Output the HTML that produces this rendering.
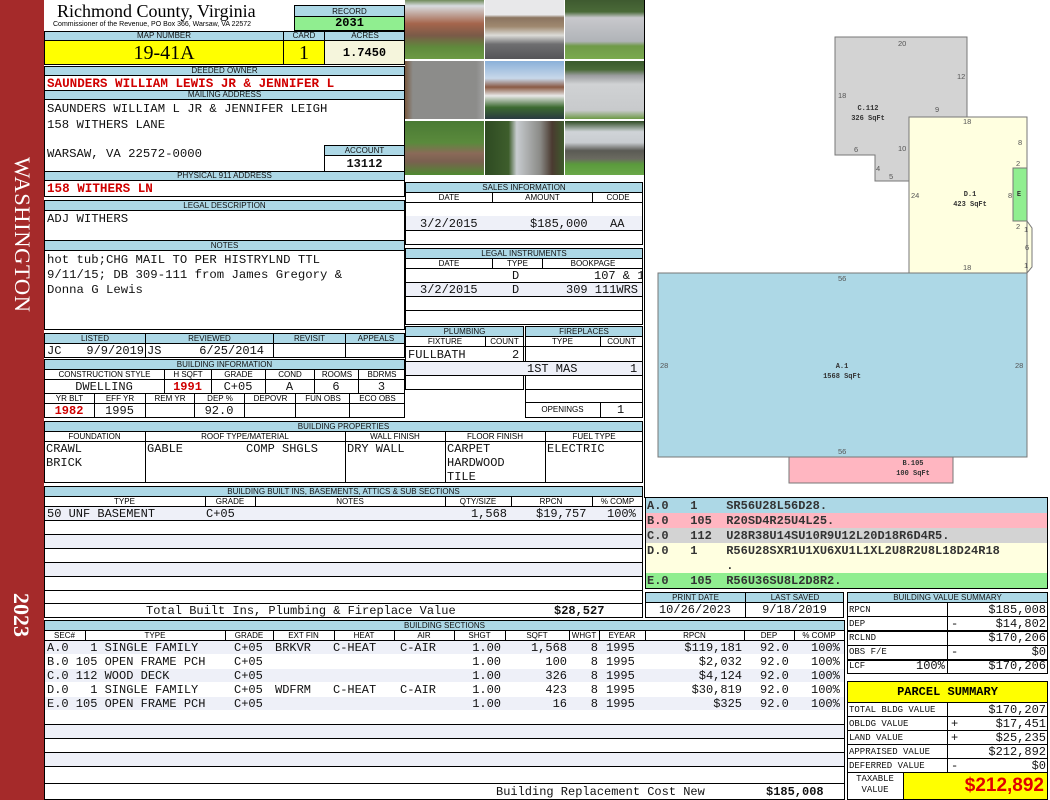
<!DOCTYPE html>
<html><head><meta charset="utf-8"><style>
*{box-sizing:border-box;margin:0;padding:0}
body{width:1050px;height:800px;position:relative;background:#fff;overflow:hidden;font-family:"Liberation Sans",sans-serif}
div{position:absolute}
.h{background:#add8e6;border:1px solid #000;font-size:8px;text-align:center;line-height:8px;color:#111;white-space:nowrap;overflow:hidden}
.h span{position:absolute;top:0;text-align:center;border-right:1px solid #000;height:100%}
.b{border:1px solid #000}
.m{font-family:"Liberation Mono",monospace;font-size:12px;white-space:pre;line-height:14px;color:#111}
.r{color:#d00000;font-weight:bold}
.hl{height:1px;background:#000}
.vl{width:1px;background:#000}
.sh{background:#eef0f8}
.ra{text-align:right}
</style></head><body>
<!-- left bar -->
<div style="left:0;top:0;width:44px;height:800px;background:#a52a2a"></div>
<div style="left:22px;top:157px;width:0;height:0"><div style="left:0;top:0;width:170px;transform-origin:0 0;transform:rotate(90deg) translate(0,-13px);color:#fff;font:22.5px 'Liberation Serif',serif;letter-spacing:0.6px;white-space:nowrap">WASHINGTON</div></div>
<div style="left:22px;top:593px"><div style="left:0;top:0;width:40px;transform-origin:0 0;transform:rotate(90deg) translate(0,-12px);color:#fff;font:bold 22px 'Liberation Serif',serif">2023</div></div>

<!-- header -->
<div style="left:57px;top:2px;font:18px 'Liberation Serif',serif;color:#000;line-height:19px;white-space:nowrap">Richmond County, Virginia</div>
<div style="left:53px;top:20px;font-size:7px;line-height:9px;color:#000;white-space:nowrap">Commissioner of the Revenue, PO Box 366, Warsaw, VA 22572</div>
<div class="h" style="left:294px;top:5px;width:111px;height:12px;line-height:11px">RECORD</div>
<div style="left:294px;top:16px;width:111px;height:15px;background:#90ee90;border:1px solid #000;text-align:center;font:bold 12px 'Liberation Mono',monospace;line-height:13px">2031</div>
<div class="h" style="left:44px;top:31px;width:361px;height:10px"><span style="left:0;width:239px">MAP NUMBER</span><span style="left:239px;width:41px">CARD</span><span style="left:280px;width:80px;border:0">ACRES</span></div>
<div style="left:44px;top:40px;width:240px;height:25px;background:#ffff00;border:1px solid #000;text-align:center;font:20px 'Liberation Serif',serif;line-height:24px">19-41A</div>
<div style="left:283px;top:40px;width:42px;height:25px;background:#ffff00;border:1px solid #000;text-align:center;font:20px 'Liberation Serif',serif;line-height:24px">1</div>
<div style="left:324px;top:40px;width:81px;height:25px;background:#f5f5dc;border:1px solid #000;text-align:center;font:bold 12px 'Liberation Mono',monospace;line-height:24px">1.7450</div>
<div class="h" style="left:44px;top:66px;width:361px;height:10px">DEEDED OWNER</div>
<div class="b" style="left:44px;top:75px;width:361px;height:16px"></div>
<div class="m r" style="left:47px;top:77px;font-size:12.6px">SAUNDERS WILLIAM LEWIS JR &amp; JENNIFER L</div>
<div class="h" style="left:44px;top:90px;width:361px;height:10px">MAILING ADDRESS</div>
<div class="b" style="left:44px;top:99px;width:361px;height:73px"></div>
<div class="m" style="left:47px;top:102px;font-size:12.3px">SAUNDERS WILLIAM L JR &amp; JENNIFER LEIGH</div>
<div class="m" style="left:47px;top:118px;font-size:12.3px">158 WITHERS LANE</div>
<div class="m" style="left:47px;top:147px;font-size:12.3px">WARSAW, VA 22572-0000</div>
<div class="h" style="left:324px;top:145px;width:81px;height:11px;line-height:10px">ACCOUNT</div>
<div class="b" style="left:324px;top:155px;width:81px;height:17px"></div>
<div class="m" style="left:324px;top:157px;width:81px;text-align:center;font-weight:bold">13112</div>
<div class="h" style="left:44px;top:171px;width:361px;height:10px">PHYSICAL 911 ADDRESS</div>
<div class="b" style="left:44px;top:180px;width:361px;height:17px"></div>
<div class="m r" style="left:47px;top:182px;font-size:12.6px">158 WITHERS LN</div>

<div class="h" style="left:44px;top:200px;width:361px;height:11px;line-height:10px">LEGAL DESCRIPTION</div>
<div class="b" style="left:44px;top:210px;width:361px;height:31px"></div>
<div class="m" style="left:47px;top:212px;font-size:12.3px">ADJ WITHERS</div>
<div class="h" style="left:44px;top:240px;width:361px;height:11px;line-height:10px">NOTES</div>
<div class="b" style="left:44px;top:250px;width:361px;height:80px"></div>
<div class="m" style="left:47px;top:253px;line-height:15px;font-size:12.3px">hot tub;CHG MAIL TO PER HISTRYLND TTL
9/11/15; DB 309-111 from James Gregory &amp;
Donna G Lewis</div>

<!-- listed -->
<div class="h" style="left:44px;top:333px;width:361px;height:11px;line-height:10px"><span style="left:0;width:101px">LISTED</span><span style="left:101px;width:128px">REVIEWED</span><span style="left:229px;width:72px">REVISIT</span><span style="left:301px;width:60px;border:0">APPEALS</span></div>
<div class="b" style="left:44px;top:343px;width:361px;height:15px"></div>
<div class="vl" style="left:145px;top:343px;height:15px"></div><div class="vl" style="left:273px;top:343px;height:15px"></div><div class="vl" style="left:345px;top:343px;height:15px"></div>
<div class="m" style="left:47px;top:344px">JC</div><div class="m ra" style="left:80px;top:344px;width:64px">9/9/2019</div>
<div class="m" style="left:147px;top:344px">JS</div><div class="m ra" style="left:180px;top:344px;width:84px">6/25/2014</div>

<!-- building info -->
<div class="h" style="left:44px;top:359px;width:361px;height:11px;line-height:10px">BUILDING INFORMATION</div>
<div class="b" style="left:44px;top:369px;width:361px;height:49px"></div>
<div class="hl" style="left:44px;top:379px;width:361px"></div>
<div class="hl" style="left:44px;top:393px;width:361px"></div>
<div class="hl" style="left:44px;top:403px;width:361px"></div>
<div style="left:45px;top:370px;width:359px;height:9px;font-size:8px;line-height:9px">
<div style="left:0;width:119px;text-align:center">CONSTRUCTION STYLE</div><div style="left:120px;width:46px;text-align:center">H SQFT</div><div style="left:167px;width:53px;text-align:center">GRADE</div><div style="left:221px;width:48px;text-align:center">COND</div><div style="left:270px;width:44px;text-align:center">ROOMS</div><div style="left:314px;width:46px;text-align:center">BDRMS</div></div>
<div class="vl" style="left:164px;top:369px;height:24px"></div><div class="vl" style="left:211px;top:369px;height:24px"></div><div class="vl" style="left:265px;top:369px;height:24px"></div><div class="vl" style="left:314px;top:369px;height:24px"></div><div class="vl" style="left:358px;top:369px;height:24px"></div>
<div class="m" style="left:44px;top:380px;width:120px;text-align:center">DWELLING</div>
<div class="m r" style="left:164px;top:380px;width:47px;text-align:center">1991</div>
<div class="m" style="left:211px;top:380px;width:54px;text-align:center">C+05</div>
<div class="m" style="left:265px;top:380px;width:49px;text-align:center">A</div>
<div class="m" style="left:314px;top:380px;width:44px;text-align:center">6</div>
<div class="m" style="left:358px;top:380px;width:47px;text-align:center">3</div>
<div style="left:45px;top:394px;width:359px;height:9px;font-size:8px;line-height:9px">
<div style="left:0;width:49px;text-align:center">YR BLT</div><div style="left:50px;width:50px;text-align:center">EFF YR</div><div style="left:100px;width:50px;text-align:center">REM YR</div><div style="left:150px;width:50px;text-align:center">DEP %</div><div style="left:200px;width:51px;text-align:center">DEPOVR</div><div style="left:251px;width:54px;text-align:center">FUN OBS</div><div style="left:305px;width:55px;text-align:center">ECO OBS</div></div>
<div class="vl" style="left:94px;top:393px;height:25px"></div><div class="vl" style="left:145px;top:393px;height:25px"></div><div class="vl" style="left:194px;top:393px;height:25px"></div><div class="vl" style="left:244px;top:393px;height:25px"></div><div class="vl" style="left:295px;top:393px;height:25px"></div><div class="vl" style="left:349px;top:393px;height:25px"></div>
<div class="m r" style="left:44px;top:404px;width:50px;text-align:center">1982</div>
<div class="m" style="left:94px;top:404px;width:51px;text-align:center">1995</div>
<div class="m" style="left:194px;top:404px;width:50px;text-align:center">92.0</div>

<!-- photos -->
<div style="left:405px;top:0;width:240px;height:175px;background:#fff"></div>
<div style="left:405px;top:0;width:79px;height:59px;background:linear-gradient(#6f8a5a 0%,#d8dce0 10%,#a5654c 40%,#7a5a48 60%,#5f8a3c 80%,#6d9a45)"></div>
<div style="left:485px;top:0;width:79px;height:59px;background:linear-gradient(#e8e8ea 0%,#e8e8ea 25%,#8a7460 30%,#a08970 45%,#dcdcd8 60%,#6e6e70 75%,#555558)"></div>
<div style="left:565px;top:0;width:80px;height:59px;background:linear-gradient(#3e5a30 0%,#4a6a38 20%,#c8c8cc 30%,#b0b4b8 70%,#6f9a48 78%,#7aaa4e)"></div>
<div style="left:405px;top:61px;width:79px;height:58px;background:linear-gradient(90deg,#7a5a40 0%,#8c8c8a 10%,#8c8c8a 90%,#a0a0a0);"></div>
<div style="left:485px;top:61px;width:79px;height:58px;background:linear-gradient(#8ab0d8 0%,#c8d8ea 30%,#8a5a44 45%,#e8e8e8 60%,#3c6a30 80%,#2a3a40)"></div>
<div style="left:565px;top:61px;width:80px;height:58px;background:linear-gradient(#3a5a2c 0%,#4a6a38 15%,#9a9c9e 25%,#d0d2d4 40%,#c8cacc 85%,#6d9a45)"></div>
<div style="left:405px;top:121px;width:79px;height:54px;background:linear-gradient(#4a7a34 0%,#5a8a3c 40%,#8a6a58 60%,#7a6050 75%,#4e8a30)"></div>
<div style="left:485px;top:121px;width:79px;height:54px;background:linear-gradient(90deg,#2e4a22 0%,#3e5e2c 30%,#c8ccd0 40%,#8a8a86 70%,#4a3a30 85%,#3e5a2c)"></div>
<div style="left:565px;top:121px;width:80px;height:54px;background:linear-gradient(#2e4a22 0%,#d0d4d8 20%,#c8ccd0 40%,#5a5a54 55%,#6a6a60 70%,#5a9a3c 80%,#6aa848)"></div>
<div class="vl" style="left:644px;top:0;height:498px"></div>

<!-- sales -->
<div class="h" style="left:405px;top:182px;width:238px;height:11px;line-height:10px">SALES INFORMATION</div>
<div class="b" style="left:405px;top:192px;width:238px;height:53px"></div>
<div style="left:406px;top:193px;width:236px;font-size:8px;line-height:9px"><div style="left:0;width:86px;text-align:center">DATE</div><div style="left:87px;width:99px;text-align:center">AMOUNT</div><div style="left:187px;width:50px;text-align:center">CODE</div></div>
<div class="vl" style="left:492px;top:192px;height:10px"></div><div class="vl" style="left:592px;top:192px;height:10px"></div>
<div class="hl" style="left:405px;top:202px;width:238px"></div>
<div class="sh" style="left:406px;top:216px;width:236px;height:14px"></div>
<div class="hl" style="left:405px;top:230px;width:238px"></div>
<div class="m" style="left:420px;top:217px">3/2/2015</div><div class="m" style="left:530px;top:217px">$185,000</div><div class="m" style="left:610px;top:217px">AA</div>

<div class="h" style="left:405px;top:248px;width:238px;height:11px;line-height:10px">LEGAL INSTRUMENTS</div>
<div class="b" style="left:405px;top:258px;width:238px;height:67px"></div>
<div style="left:406px;top:259px;width:236px;font-size:8px;line-height:9px"><div style="left:0;width:86px;text-align:center">DATE</div><div style="left:87px;width:49px;text-align:center">TYPE</div><div style="left:137px;width:100px;text-align:center">BOOKPAGE</div></div>
<div class="vl" style="left:492px;top:258px;height:10px"></div><div class="vl" style="left:542px;top:258px;height:10px"></div>
<div class="hl" style="left:405px;top:268px;width:238px"></div>
<div class="hl" style="left:405px;top:282px;width:238px"></div>
<div class="sh" style="left:406px;top:283px;width:236px;height:13px"></div>
<div class="hl" style="left:405px;top:296px;width:238px"></div>
<div class="hl" style="left:405px;top:310px;width:238px"></div>
<div class="m" style="left:512px;top:269px">D</div><div class="m" style="left:594px;top:269px;width:48px;overflow:hidden">107 &amp; 1</div>
<div class="m" style="left:420px;top:283px">3/2/2015</div><div class="m" style="left:512px;top:283px">D</div><div class="m" style="left:566px;top:283px">309 111WRS</div>

<!-- plumbing -->
<div class="h" style="left:405px;top:326px;width:119px;height:11px;line-height:10px">PLUMBING</div>
<div class="h" style="left:525px;top:326px;width:118px;height:11px;line-height:10px">FIREPLACES</div>
<div class="b" style="left:405px;top:336px;width:119px;height:54px"></div>
<div class="b" style="left:525px;top:336px;width:118px;height:82px"></div>
<div style="left:405px;top:337px;width:238px;font-size:8px;line-height:9px"><div style="left:0;width:80px;text-align:center">FIXTURE</div><div style="left:80px;width:39px;text-align:center">COUNT</div><div style="left:120px;width:75px;text-align:center">TYPE</div><div style="left:195px;width:43px;text-align:center">COUNT</div></div>
<div class="vl" style="left:485px;top:336px;height:10px"></div><div class="vl" style="left:600px;top:336px;height:10px"></div>
<div class="hl" style="left:405px;top:346px;width:238px"></div>
<div class="hl" style="left:405px;top:361px;width:238px"></div>
<div class="hl" style="left:405px;top:375px;width:238px"></div>
<div class="sh" style="left:406px;top:362px;width:236px;height:13px"></div>
<div class="hl" style="left:525px;top:389px;width:118px"></div>
<div class="hl" style="left:525px;top:402px;width:118px"></div>
<div class="vl" style="left:600px;top:402px;height:16px"></div>
<div class="m" style="left:408px;top:348px">FULLBATH</div><div class="m" style="left:512px;top:348px">2</div>
<div class="m" style="left:527px;top:362px">1ST MAS</div><div class="m" style="left:630px;top:362px">1</div>
<div style="left:525px;top:405px;width:75px;text-align:center;font-size:8px">OPENINGS</div><div class="m" style="left:617px;top:403px">1</div>

<!-- building properties -->
<div class="h" style="left:44px;top:421px;width:599px;height:11px;line-height:10px">BUILDING PROPERTIES</div>
<div class="b" style="left:44px;top:431px;width:599px;height:52px"></div>
<div style="left:44px;top:432px;width:599px;font-size:8px;line-height:9px"><div style="left:0;width:101px;text-align:center">FOUNDATION</div><div style="left:101px;width:200px;text-align:center">ROOF TYPE/MATERIAL</div><div style="left:301px;width:100px;text-align:center">WALL FINISH</div><div style="left:401px;width:100px;text-align:center">FLOOR FINISH</div><div style="left:501px;width:98px;text-align:center">FUEL TYPE</div></div>
<div class="hl" style="left:44px;top:441px;width:599px"></div>
<div class="vl" style="left:145px;top:431px;height:52px"></div><div class="vl" style="left:345px;top:431px;height:52px"></div><div class="vl" style="left:445px;top:431px;height:52px"></div><div class="vl" style="left:545px;top:431px;height:52px"></div>
<div class="m" style="left:46px;top:442px">CRAWL
BRICK</div>
<div class="m" style="left:147px;top:442px">GABLE</div><div class="m" style="left:246px;top:442px">COMP SHGLS</div>
<div class="m" style="left:347px;top:442px">DRY WALL</div>
<div class="m" style="left:447px;top:442px">CARPET
HARDWOOD
TILE</div>
<div class="m" style="left:547px;top:442px">ELECTRIC</div>

<!-- built ins -->
<div class="h" style="left:44px;top:486px;width:599px;height:11px;line-height:10px">BUILDING BUILT INS, BASEMENTS, ATTICS &amp; SUB SECTIONS</div>
<div class="b" style="left:44px;top:496px;width:599px;height:122px"></div>
<div style="left:44px;top:497px;width:599px;font-size:8px;line-height:9px"><div style="left:0;width:161px;text-align:center">TYPE</div><div style="left:161px;width:50px;text-align:center">GRADE</div><div style="left:211px;width:190px;text-align:center">NOTES</div><div style="left:401px;width:66px;text-align:center">QTY/SIZE</div><div style="left:467px;width:80px;text-align:center">RPCN</div><div style="left:548px;width:51px;text-align:center">% COMP</div></div>
<div class="vl" style="left:205px;top:496px;height:10px"></div><div class="vl" style="left:255px;top:496px;height:10px"></div><div class="vl" style="left:445px;top:496px;height:10px"></div><div class="vl" style="left:511px;top:496px;height:10px"></div><div class="vl" style="left:592px;top:496px;height:10px"></div>
<div class="hl" style="left:44px;top:506px;width:599px"></div>
<div class="sh" style="left:45px;top:507px;width:597px;height:13px"></div>
<div class="hl" style="left:44px;top:520px;width:599px"></div>
<div class="hl" style="left:44px;top:534px;width:599px"></div>
<div class="sh" style="left:45px;top:535px;width:597px;height:13px"></div>
<div class="hl" style="left:44px;top:548px;width:599px"></div>
<div class="hl" style="left:44px;top:562px;width:599px"></div>
<div class="sh" style="left:45px;top:563px;width:597px;height:13px"></div>
<div class="hl" style="left:44px;top:576px;width:599px"></div>
<div class="hl" style="left:44px;top:590px;width:599px"></div>
<div class="hl" style="left:44px;top:603px;width:599px"></div>
<div class="m" style="left:47px;top:507px">50 UNF BASEMENT</div><div class="m" style="left:206px;top:507px">C+05</div>
<div class="m" style="left:471px;top:507px">1,568</div><div class="m" style="left:536px;top:507px">$19,757</div><div class="m" style="left:607px;top:507px">100%</div>
<div class="m" style="left:146px;top:604px">Total Built Ins, Plumbing &amp; Fireplace Value</div>
<div class="m" style="left:554px;top:604px;font-weight:bold">$28,527</div>

<!-- building sections -->
<div class="h" style="left:44px;top:620px;width:801px;height:11px;line-height:10px">BUILDING SECTIONS</div>
<div class="b" style="left:44px;top:630px;width:801px;height:170px"></div>
<div style="left:44px;top:631px;width:801px;font-size:8px;line-height:9px"><div style="left:0;width:41px;text-align:center">SEC#</div><div style="left:41px;width:140px;text-align:center">TYPE</div><div style="left:181px;width:48px;text-align:center">GRADE</div><div style="left:229px;width:61px;text-align:center">EXT FIN</div><div style="left:290px;width:60px;text-align:center">HEAT</div><div style="left:350px;width:60px;text-align:center">AIR</div><div style="left:410px;width:51px;text-align:center">SHGT</div><div style="left:461px;width:64px;text-align:center">SQFT</div><div style="left:525px;width:30px;text-align:center">WHGT</div><div style="left:555px;width:46px;text-align:center">EYEAR</div><div style="left:601px;width:99px;text-align:center">RPCN</div><div style="left:700px;width:50px;text-align:center">DEP</div><div style="left:750px;width:50px;text-align:center">% COMP</div></div>
<div class="vl" style="left:85px;top:630px;height:10px"></div><div class="vl" style="left:225px;top:630px;height:10px"></div><div class="vl" style="left:273px;top:630px;height:10px"></div><div class="vl" style="left:334px;top:630px;height:10px"></div><div class="vl" style="left:394px;top:630px;height:10px"></div><div class="vl" style="left:454px;top:630px;height:10px"></div><div class="vl" style="left:505px;top:630px;height:10px"></div><div class="vl" style="left:569px;top:630px;height:10px"></div><div class="vl" style="left:599px;top:630px;height:10px"></div><div class="vl" style="left:645px;top:630px;height:10px"></div><div class="vl" style="left:744px;top:630px;height:10px"></div><div class="vl" style="left:794px;top:630px;height:10px"></div>
<div class="hl" style="left:44px;top:640px;width:801px"></div>
<div class="sh" style="left:45px;top:641px;width:799px;height:13px"></div>
<div class="sh" style="left:45px;top:669px;width:799px;height:13px"></div>
<div class="sh" style="left:45px;top:697px;width:799px;height:13px"></div>
<div class="hl" style="left:44px;top:724px;width:801px"></div>
<div class="sh" style="left:45px;top:725px;width:799px;height:13px"></div>
<div class="hl" style="left:44px;top:738px;width:801px"></div>
<div class="hl" style="left:44px;top:752px;width:801px"></div>
<div class="sh" style="left:45px;top:753px;width:799px;height:13px"></div>
<div class="hl" style="left:44px;top:766px;width:801px"></div>
<div class="hl" style="left:44px;top:783px;width:801px"></div>
<div class="m" style="left:47px;top:641px">A.0   1 SINGLE FAMILY
B.0 105 OPEN FRAME PCH
C.0 112 WOOD DECK
D.0   1 SINGLE FAMILY
E.0 105 OPEN FRAME PCH</div>
<div class="m" style="left:234px;top:641px">C+05
C+05
C+05
C+05
C+05</div>
<div class="m" style="left:275px;top:641px">BRKVR


WDFRM</div>
<div class="m" style="left:333px;top:641px">C-HEAT


C-HEAT</div>
<div class="m" style="left:400px;top:641px">C-AIR


C-AIR</div>
<div class="m ra" style="left:455px;top:641px;width:46px">1.00
1.00
1.00
1.00
1.00</div>
<div class="m ra" style="left:510px;top:641px;width:57px">1,568
100
326
423
16</div>
<div class="m ra" style="left:575px;top:641px;width:23px">8
8
8
8
8</div>
<div class="m" style="left:606px;top:641px">1995
1995
1995
1995
1995</div>
<div class="m ra" style="left:645px;top:641px;width:97px">$119,181
$2,032
$4,124
$30,819
$325</div>
<div class="m" style="left:760px;top:641px">92.0
92.0
92.0
92.0
92.0</div>
<div class="m" style="left:811px;top:641px">100%
100%
100%
100%
100%</div>
<div class="m" style="left:496px;top:785px">Building Replacement Cost New</div>
<div class="m" style="left:766px;top:785px;font-weight:bold">$185,008</div>

<!-- sketch -->
<svg style="position:absolute;left:0;top:0" width="1050" height="500">
<polygon points="835,37 967,37 967,117 909,117 909,181 875,181 875,155 835,155" fill="#d3d3d3" stroke="#777"/>
<polygon points="909,117 1027,117 1027,273 909,273" fill="#ffffe0" stroke="#777"/>
<polygon points="1027,221 1032,228 1032,267 1027,273" fill="#ffffe0" stroke="#777"/>
<rect x="1013" y="168" width="14" height="53" fill="#90ee90" stroke="#777"/>
<rect x="658" y="273" width="369" height="184" fill="#add8e6" stroke="#777"/>
<rect x="789" y="457" width="164" height="26" fill="#ffb6c1" stroke="#777"/>
<g font-family="Liberation Sans" font-size="7.5" fill="#555">
<text x="898" y="46">20</text><text x="957" y="79">12</text><text x="838" y="98">18</text><text x="935" y="112">9</text><text x="854" y="152">6</text><text x="898" y="151">10</text><text x="876" y="171">4</text><text x="889" y="179">5</text>
<text x="963" y="124">18</text><text x="1018" y="145">8</text><text x="1016" y="166">2</text><text x="1008" y="198">8</text><text x="911" y="198">24</text><text x="1016" y="229">2</text><text x="1024" y="232">1</text><text x="1025" y="250">6</text><text x="1024" y="268">1</text><text x="963" y="270">18</text>
<text x="838" y="281">56</text><text x="660" y="368">28</text><text x="1015" y="368">28</text><text x="838" y="454">56</text>
</g>
<g font-family="Liberation Mono" font-size="7" font-weight="bold" fill="#333" text-anchor="middle">
<text x="868" y="110">C.112</text><text x="868" y="120">326 SqFt</text>
<text x="970" y="196">D.1</text><text x="970" y="206">423 SqFt</text><text x="1019" y="196">E</text>
<text x="842" y="368">A.1</text><text x="842" y="378">1568 SqFt</text>
<text x="913" y="465">B.105</text><text x="913" y="475">100 SqFt</text>
</g>
</svg>

<!-- sketch codes -->
<div class="b" style="left:645px;top:497px;width:403px;height:92px"></div>
<div style="left:646px;top:498px;width:401px;height:15px;background:#add8e6"></div>
<div style="left:646px;top:513px;width:401px;height:15px;background:#ffb6c1"></div>
<div style="left:646px;top:528px;width:401px;height:15px;background:#d3d3d3"></div>
<div style="left:646px;top:543px;width:401px;height:30px;background:#ffffe0"></div>
<div style="left:646px;top:573px;width:401px;height:15px;background:#90ee90"></div>
<div class="m" style="left:647px;top:499px;line-height:15px;font-weight:bold;color:#333">A.0   1    SR56U28L56D28.
B.0   105  R20SD4R25U4L25.
C.0   112  U28R38U14SU10R9U12L20D18R6D4R5.
D.0   1    R56U28SXR1U1XU6XU1L1XL2U8R2U8L18D24R18
           .
E.0   105  R56U36SU8L2D8R2.</div>

<!-- print date -->
<div class="h" style="left:645px;top:592px;width:199px;height:11px;line-height:10px"><span style="left:0;width:100px">PRINT DATE</span><span style="left:100px;width:98px;border:0">LAST SAVED</span></div>
<div class="b" style="left:645px;top:602px;width:199px;height:16px"></div>
<div class="vl" style="left:745px;top:602px;height:16px"></div>
<div class="m" style="left:645px;top:603px;width:100px;text-align:center">10/26/2023</div>
<div class="m" style="left:745px;top:603px;width:99px;text-align:center">9/18/2019</div>

<!-- building value summary -->
<div class="h" style="left:847px;top:592px;width:201px;height:11px;line-height:10px">BUILDING VALUE SUMMARY</div>
<div class="b" style="left:847px;top:602px;width:201px;height:72px"></div>
<div class="vl" style="left:947px;top:602px;height:72px"></div>
<div class="hl" style="left:847px;top:616px;width:201px"></div>
<div class="hl" style="left:847px;top:630px;width:201px;height:2px"></div>
<div class="hl" style="left:847px;top:645px;width:201px"></div>
<div class="hl" style="left:847px;top:659px;width:201px;height:2px"></div>
<div class="m" style="left:849px;top:603px;font-size:9px;line-height:14px">RPCN
DEP
RCLND
OBS F/E
LCF</div>
<div class="m" style="left:916px;top:659px">100%</div>
<div class="m" style="left:951px;top:603px">
-

-</div>
<div class="m" style="left:950px;top:603px;width:96px;text-align:right">$185,008
$14,802
$170,206
$0
$170,206</div>

<!-- parcel summary -->
<div style="left:847px;top:681px;width:201px;height:22px;background:#ffff00;border:1px solid #000;text-align:center;font:bold 12px 'Liberation Mono',monospace;line-height:20px">PARCEL SUMMARY</div>
<div class="b" style="left:847px;top:702px;width:201px;height:98px"></div>
<div class="vl" style="left:947px;top:702px;height:70px"></div>
<div class="hl" style="left:847px;top:716px;width:201px"></div>
<div class="hl" style="left:847px;top:730px;width:201px"></div>
<div class="hl" style="left:847px;top:744px;width:201px"></div>
<div class="hl" style="left:847px;top:758px;width:201px"></div>
<div class="hl" style="left:847px;top:772px;width:201px"></div>
<div class="m" style="left:849px;top:703px;font-size:9px;line-height:14px">TOTAL BLDG VALUE
OBLDG VALUE
LAND VALUE
APPRAISED VALUE
DEFERRED VALUE</div>
<div class="m" style="left:951px;top:703px">
+
+

-</div>
<div class="m" style="left:950px;top:703px;width:96px;text-align:right">$170,207
$17,451
$25,235
$212,892
$0</div>
<div class="m" style="left:849px;top:774px;width:52px;text-align:center;font-size:9px;line-height:11px">TAXABLE
VALUE</div>
<div style="left:903px;top:772px;width:145px;height:28px;background:#ffff00;border:1px solid #000;text-align:right;padding-right:3px;font:bold 19px 'Liberation Sans',sans-serif;line-height:26px;color:#e00000">$212,892</div>
</body></html>
